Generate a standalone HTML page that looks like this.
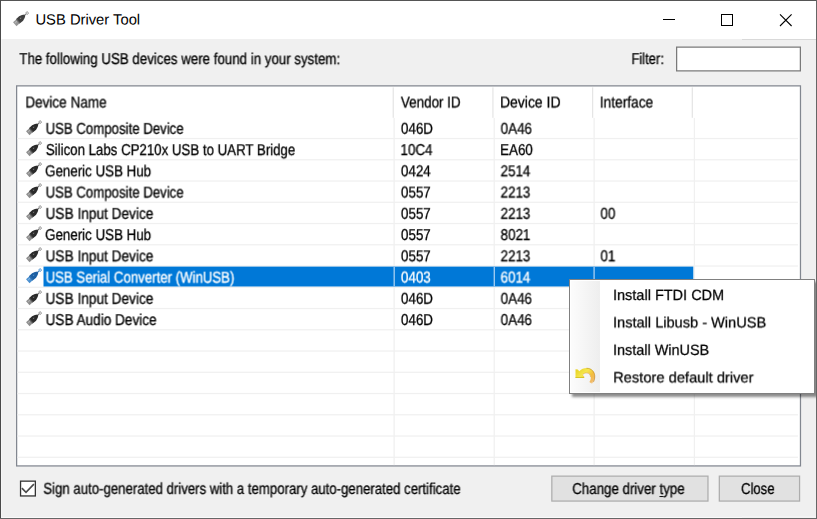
<!DOCTYPE html>
<html><head><meta charset="utf-8"><title>USB Driver Tool</title>
<style>
html,body{margin:0;padding:0;}
body{width:817px;height:519px;overflow:hidden;background:#f0f0f0;font-family:"Liberation Sans", sans-serif;}
#win{position:absolute;left:0;top:0;width:817px;height:519px;background:#f0f0f0;overflow:hidden;}
#win div,#win span,#win svg{position:absolute;}
.t{left:0;top:0;text-rendering:geometricPrecision;white-space:nowrap;line-height:20px;transform-origin:0 0;}
.b{filter:blur(0.3px);-webkit-text-stroke:0.3px currentColor;}
.ic{filter:blur(0.35px);}
.ic0{opacity:0.9;filter:blur(0.25px);}
.m{filter:blur(0.25px);-webkit-text-stroke:0.25px currentColor;}
.t u{position:static;text-decoration-thickness:1.2px;text-underline-offset:1.5px;}
#titlebar{left:1px;top:1px;width:815px;height:38px;background:#fff;}
#bt{left:0;top:0;width:817px;height:1px;background:#555;}
#bl{left:0;top:0;width:1px;height:519px;background:#4a4a4a;}
#br{left:816px;top:0;width:1px;height:519px;background:#666;}
#bb{left:0;top:518px;width:817px;height:1px;background:#666;}
#menu{left:569.2px;top:279.3px;width:245.8px;height:114.4px;box-sizing:border-box;border:1px solid #808080;background:#fff;box-shadow:2.5px 2.5px 2.5px rgba(0,0,0,0.45);}
#mmargin{left:0.4px;top:1.0px;width:29.3px;height:110.4px;background:linear-gradient(to right,#fcfcfc,#eeeeee);}
</style></head><body>
<div id="win">
<div id="titlebar"></div>
<svg id="shapes" style="left:0;top:0;filter:blur(0.3px)" width="817" height="519" viewBox="0 0 817 519"><rect x="676.625" y="47.125" width="123.750" height="23.750" fill="#fff" stroke="#7a7a7a" stroke-width="1.25"/>
<rect x="16.625" y="85.875" width="783.850" height="380.050" fill="#fff" stroke="#828790" stroke-width="1.25"/>
<rect x="17.25" y="137.90" width="780.7" height="1.25" fill="#f0f0f0"/>
<rect x="17.25" y="159.15" width="780.7" height="1.25" fill="#f0f0f0"/>
<rect x="17.25" y="180.40" width="780.7" height="1.25" fill="#f0f0f0"/>
<rect x="17.25" y="201.65" width="780.7" height="1.25" fill="#f0f0f0"/>
<rect x="17.25" y="222.90" width="780.7" height="1.25" fill="#f0f0f0"/>
<rect x="17.25" y="244.15" width="780.7" height="1.25" fill="#f0f0f0"/>
<rect x="17.25" y="265.40" width="780.7" height="1.25" fill="#f0f0f0"/>
<rect x="17.25" y="286.65" width="780.7" height="1.25" fill="#f0f0f0"/>
<rect x="17.25" y="307.90" width="780.7" height="1.25" fill="#f0f0f0"/>
<rect x="17.25" y="329.15" width="780.7" height="1.25" fill="#f0f0f0"/>
<rect x="17.25" y="350.40" width="780.7" height="1.25" fill="#f0f0f0"/>
<rect x="17.25" y="371.65" width="780.7" height="1.25" fill="#f0f0f0"/>
<rect x="17.25" y="392.90" width="780.7" height="1.25" fill="#f0f0f0"/>
<rect x="17.25" y="414.15" width="780.7" height="1.25" fill="#f0f0f0"/>
<rect x="17.25" y="435.40" width="780.7" height="1.25" fill="#f0f0f0"/>
<rect x="17.25" y="456.65" width="780.7" height="1.25" fill="#f0f0f0"/>
<rect x="393.50" y="117.9" width="1.25" height="347.2" fill="#f0f0f0"/>
<rect x="493.60" y="117.9" width="1.25" height="347.2" fill="#f0f0f0"/>
<rect x="593.50" y="117.9" width="1.25" height="347.2" fill="#f0f0f0"/>
<rect x="693.80" y="117.9" width="1.25" height="347.2" fill="#f0f0f0"/>
<rect x="392.60" y="87.4" width="1.25" height="30.4" fill="#e5e5e5"/>
<rect x="492.30" y="87.4" width="1.25" height="30.4" fill="#e5e5e5"/>
<rect x="592.00" y="87.4" width="1.25" height="30.4" fill="#e5e5e5"/>
<rect x="691.70" y="87.4" width="1.25" height="30.4" fill="#e5e5e5"/>
<rect x="43.5" y="266.6" width="649.8" height="19.9" fill="#0078d7"/>
<rect x="393.50" y="266.6" width="1.4" height="19.9" fill="#9cc9f0"/>
<rect x="493.60" y="266.6" width="1.4" height="19.9" fill="#9cc9f0"/>
<rect x="593.40" y="266.6" width="1.4" height="19.9" fill="#9cc9f0"/>
<rect x="20.550" y="481.150" width="14.800" height="14.800" fill="#fff" stroke="#333" stroke-width="1.3"/>
<path d="M21.9,488.2 L26,492.3 L33.9,484.2" fill="none" stroke="#4a4a4a" stroke-width="1.65"/>
<rect x="551.825" y="476.125" width="156.150" height="24.950" fill="#e1e1e1" stroke="#adadad" stroke-width="1.25"/>
<rect x="719.325" y="476.125" width="80.250" height="24.950" fill="#e1e1e1" stroke="#adadad" stroke-width="1.25"/></svg>
<div id="menu"><div id="mmargin"></div></div>
<svg style="left:570px;top:362px;filter:blur(0.35px)" width="32" height="28" viewBox="570 362 32 28">
<defs><linearGradient id="ug" gradientUnits="userSpaceOnUse" x1="578" y1="368" x2="593" y2="385">
<stop offset="0" stop-color="#e6d322"/><stop offset="0.35" stop-color="#f6e64e"/><stop offset="0.62" stop-color="#f3bd3e"/><stop offset="0.85" stop-color="#f2a838" stop-opacity="0.75"/><stop offset="1" stop-color="#f2a838" stop-opacity="0"/></linearGradient></defs>
<path d="M575.5,369.3 L577.8,369.5 L579.3,371.3 C581.5,368.8 584.5,367.8 587.5,368 C592,368.4 595.2,372 595,377 C594.9,380 593.8,382.3 592,383.8 L589.3,382 C590.5,380.6 590.9,378.9 590.8,377 C590.6,374.6 589,372.9 586.8,372.8 C585,372.8 583.6,373.6 582.6,374.8 L584.2,376.4 L584.2,378 L575.5,378 Z" fill="url(#ug)"/>
<path d="M575.5,377.3 L584.2,377.3 L584.2,378 L575.5,378 Z" fill="#c9b818"/>
<path d="M586.5,368.2 C591.6,368.3 595,372 594.8,377 C594.7,379 594.3,380.6 593.5,382" fill="none" stroke="#a8741c" stroke-opacity="0.55" stroke-width="0.8"/>
<path d="M582.8,374.6 C583.8,373.4 585.2,372.9 586.8,373 C588.9,373.1 590.4,374.7 590.6,377" fill="none" stroke="#d08a20" stroke-opacity="0.6" stroke-width="0.7"/>
</svg>
<svg class="ic0" style="left:11.00px;top:9.30px" width="20" height="19" viewBox="0 0 20 19"><g transform="translate(4,15) rotate(-42)"><rect x="-0.3" y="-2.6" width="4.6" height="5.2" fill="#8c8c8c"/><rect x="0.6" y="-1.3" width="2.8" height="1.1" fill="#b0b0b0"/><rect x="3.6" y="-2.8" width="1.4" height="5.6" fill="#5a5a5a"/><path d="M4.6,-2.9 L8.2,-3.0 Q11.5,-2.2 13.4,-0.6 L13.4,0.6 Q11.5,2.2 8.2,3.0 L4.6,2.9 Z" fill="#2b2b2b"/><rect x="7.2" y="-0.9" width="1.6" height="0.8" fill="#b0b0b0" opacity="0.7"/><path d="M13.2,0 L15.2,0" stroke="#5a5a5a" stroke-width="0.8"/><circle cx="16.3" cy="0" r="1.25" fill="none" stroke="#8c8c8c" stroke-width="0.9"/></g></svg>
<svg class="ic" style="left:23.60px;top:117.60px" width="20" height="19" viewBox="0 0 20 19"><g transform="translate(4,15) rotate(-42)"><rect x="-0.3" y="-2.6" width="4.6" height="5.2" fill="#8c8c8c"/><rect x="0.6" y="-1.3" width="2.8" height="1.1" fill="#b0b0b0"/><rect x="3.6" y="-2.8" width="1.4" height="5.6" fill="#5a5a5a"/><path d="M4.6,-2.9 L8.2,-3.0 Q11.5,-2.2 13.4,-0.6 L13.4,0.6 Q11.5,2.2 8.2,3.0 L4.6,2.9 Z" fill="#2b2b2b"/><rect x="7.2" y="-0.9" width="1.6" height="0.8" fill="#b0b0b0" opacity="0.7"/><path d="M13.2,0 L15.2,0" stroke="#5a5a5a" stroke-width="0.8"/><circle cx="16.3" cy="0" r="1.25" fill="none" stroke="#8c8c8c" stroke-width="0.9"/></g></svg>
<svg class="ic" style="left:23.60px;top:138.85px" width="20" height="19" viewBox="0 0 20 19"><g transform="translate(4,15) rotate(-42)"><rect x="-0.3" y="-2.6" width="4.6" height="5.2" fill="#8c8c8c"/><rect x="0.6" y="-1.3" width="2.8" height="1.1" fill="#b0b0b0"/><rect x="3.6" y="-2.8" width="1.4" height="5.6" fill="#5a5a5a"/><path d="M4.6,-2.9 L8.2,-3.0 Q11.5,-2.2 13.4,-0.6 L13.4,0.6 Q11.5,2.2 8.2,3.0 L4.6,2.9 Z" fill="#2b2b2b"/><rect x="7.2" y="-0.9" width="1.6" height="0.8" fill="#b0b0b0" opacity="0.7"/><path d="M13.2,0 L15.2,0" stroke="#5a5a5a" stroke-width="0.8"/><circle cx="16.3" cy="0" r="1.25" fill="none" stroke="#8c8c8c" stroke-width="0.9"/></g></svg>
<svg class="ic" style="left:23.60px;top:160.10px" width="20" height="19" viewBox="0 0 20 19"><g transform="translate(4,15) rotate(-42)"><rect x="-0.3" y="-2.6" width="4.6" height="5.2" fill="#8c8c8c"/><rect x="0.6" y="-1.3" width="2.8" height="1.1" fill="#b0b0b0"/><rect x="3.6" y="-2.8" width="1.4" height="5.6" fill="#5a5a5a"/><path d="M4.6,-2.9 L8.2,-3.0 Q11.5,-2.2 13.4,-0.6 L13.4,0.6 Q11.5,2.2 8.2,3.0 L4.6,2.9 Z" fill="#2b2b2b"/><rect x="7.2" y="-0.9" width="1.6" height="0.8" fill="#b0b0b0" opacity="0.7"/><path d="M13.2,0 L15.2,0" stroke="#5a5a5a" stroke-width="0.8"/><circle cx="16.3" cy="0" r="1.25" fill="none" stroke="#8c8c8c" stroke-width="0.9"/></g></svg>
<svg class="ic" style="left:23.60px;top:181.35px" width="20" height="19" viewBox="0 0 20 19"><g transform="translate(4,15) rotate(-42)"><rect x="-0.3" y="-2.6" width="4.6" height="5.2" fill="#8c8c8c"/><rect x="0.6" y="-1.3" width="2.8" height="1.1" fill="#b0b0b0"/><rect x="3.6" y="-2.8" width="1.4" height="5.6" fill="#5a5a5a"/><path d="M4.6,-2.9 L8.2,-3.0 Q11.5,-2.2 13.4,-0.6 L13.4,0.6 Q11.5,2.2 8.2,3.0 L4.6,2.9 Z" fill="#2b2b2b"/><rect x="7.2" y="-0.9" width="1.6" height="0.8" fill="#b0b0b0" opacity="0.7"/><path d="M13.2,0 L15.2,0" stroke="#5a5a5a" stroke-width="0.8"/><circle cx="16.3" cy="0" r="1.25" fill="none" stroke="#8c8c8c" stroke-width="0.9"/></g></svg>
<svg class="ic" style="left:23.60px;top:202.60px" width="20" height="19" viewBox="0 0 20 19"><g transform="translate(4,15) rotate(-42)"><rect x="-0.3" y="-2.6" width="4.6" height="5.2" fill="#8c8c8c"/><rect x="0.6" y="-1.3" width="2.8" height="1.1" fill="#b0b0b0"/><rect x="3.6" y="-2.8" width="1.4" height="5.6" fill="#5a5a5a"/><path d="M4.6,-2.9 L8.2,-3.0 Q11.5,-2.2 13.4,-0.6 L13.4,0.6 Q11.5,2.2 8.2,3.0 L4.6,2.9 Z" fill="#2b2b2b"/><rect x="7.2" y="-0.9" width="1.6" height="0.8" fill="#b0b0b0" opacity="0.7"/><path d="M13.2,0 L15.2,0" stroke="#5a5a5a" stroke-width="0.8"/><circle cx="16.3" cy="0" r="1.25" fill="none" stroke="#8c8c8c" stroke-width="0.9"/></g></svg>
<svg class="ic" style="left:23.60px;top:223.85px" width="20" height="19" viewBox="0 0 20 19"><g transform="translate(4,15) rotate(-42)"><rect x="-0.3" y="-2.6" width="4.6" height="5.2" fill="#8c8c8c"/><rect x="0.6" y="-1.3" width="2.8" height="1.1" fill="#b0b0b0"/><rect x="3.6" y="-2.8" width="1.4" height="5.6" fill="#5a5a5a"/><path d="M4.6,-2.9 L8.2,-3.0 Q11.5,-2.2 13.4,-0.6 L13.4,0.6 Q11.5,2.2 8.2,3.0 L4.6,2.9 Z" fill="#2b2b2b"/><rect x="7.2" y="-0.9" width="1.6" height="0.8" fill="#b0b0b0" opacity="0.7"/><path d="M13.2,0 L15.2,0" stroke="#5a5a5a" stroke-width="0.8"/><circle cx="16.3" cy="0" r="1.25" fill="none" stroke="#8c8c8c" stroke-width="0.9"/></g></svg>
<svg class="ic" style="left:23.60px;top:245.10px" width="20" height="19" viewBox="0 0 20 19"><g transform="translate(4,15) rotate(-42)"><rect x="-0.3" y="-2.6" width="4.6" height="5.2" fill="#8c8c8c"/><rect x="0.6" y="-1.3" width="2.8" height="1.1" fill="#b0b0b0"/><rect x="3.6" y="-2.8" width="1.4" height="5.6" fill="#5a5a5a"/><path d="M4.6,-2.9 L8.2,-3.0 Q11.5,-2.2 13.4,-0.6 L13.4,0.6 Q11.5,2.2 8.2,3.0 L4.6,2.9 Z" fill="#2b2b2b"/><rect x="7.2" y="-0.9" width="1.6" height="0.8" fill="#b0b0b0" opacity="0.7"/><path d="M13.2,0 L15.2,0" stroke="#5a5a5a" stroke-width="0.8"/><circle cx="16.3" cy="0" r="1.25" fill="none" stroke="#8c8c8c" stroke-width="0.9"/></g></svg>
<svg class="ic" style="left:23.60px;top:266.35px" width="20" height="19" viewBox="0 0 20 19"><g transform="translate(4,15) rotate(-42)"><rect x="-0.3" y="-2.6" width="4.6" height="5.2" fill="#4a8fcf"/><rect x="0.6" y="-1.3" width="2.8" height="1.1" fill="#7fb4e4"/><rect x="3.6" y="-2.8" width="1.4" height="5.6" fill="#2f6fb0"/><path d="M4.6,-2.9 L8.2,-3.0 Q11.5,-2.2 13.4,-0.6 L13.4,0.6 Q11.5,2.2 8.2,3.0 L4.6,2.9 Z" fill="#1c5fa3"/><rect x="7.2" y="-0.9" width="1.6" height="0.8" fill="#7fb4e4" opacity="0.7"/><path d="M13.2,0 L15.2,0" stroke="#2f6fb0" stroke-width="0.8"/><circle cx="16.3" cy="0" r="1.25" fill="none" stroke="#4a8fcf" stroke-width="0.9"/></g></svg>
<svg class="ic" style="left:23.60px;top:287.60px" width="20" height="19" viewBox="0 0 20 19"><g transform="translate(4,15) rotate(-42)"><rect x="-0.3" y="-2.6" width="4.6" height="5.2" fill="#8c8c8c"/><rect x="0.6" y="-1.3" width="2.8" height="1.1" fill="#b0b0b0"/><rect x="3.6" y="-2.8" width="1.4" height="5.6" fill="#5a5a5a"/><path d="M4.6,-2.9 L8.2,-3.0 Q11.5,-2.2 13.4,-0.6 L13.4,0.6 Q11.5,2.2 8.2,3.0 L4.6,2.9 Z" fill="#2b2b2b"/><rect x="7.2" y="-0.9" width="1.6" height="0.8" fill="#b0b0b0" opacity="0.7"/><path d="M13.2,0 L15.2,0" stroke="#5a5a5a" stroke-width="0.8"/><circle cx="16.3" cy="0" r="1.25" fill="none" stroke="#8c8c8c" stroke-width="0.9"/></g></svg>
<svg class="ic" style="left:23.60px;top:308.85px" width="20" height="19" viewBox="0 0 20 19"><g transform="translate(4,15) rotate(-42)"><rect x="-0.3" y="-2.6" width="4.6" height="5.2" fill="#8c8c8c"/><rect x="0.6" y="-1.3" width="2.8" height="1.1" fill="#b0b0b0"/><rect x="3.6" y="-2.8" width="1.4" height="5.6" fill="#5a5a5a"/><path d="M4.6,-2.9 L8.2,-3.0 Q11.5,-2.2 13.4,-0.6 L13.4,0.6 Q11.5,2.2 8.2,3.0 L4.6,2.9 Z" fill="#2b2b2b"/><rect x="7.2" y="-0.9" width="1.6" height="0.8" fill="#b0b0b0" opacity="0.7"/><path d="M13.2,0 L15.2,0" stroke="#5a5a5a" stroke-width="0.8"/><circle cx="16.3" cy="0" r="1.25" fill="none" stroke="#8c8c8c" stroke-width="0.9"/></g></svg>
<svg style="left:660px;top:10px" width="140" height="20" viewBox="0 0 140 20">
<path d="M3,9.5 H15" stroke="#000" stroke-width="1" fill="none"/>
<rect x="61.5" y="4.5" width="11" height="11" stroke="#000" stroke-width="1" fill="none"/>
<path d="M120.0,4.4 L131.6,16.0 M131.6,4.4 L120.0,16.0" stroke="#000" stroke-width="1.1" fill="none"/>
</svg>
<span class="t tt" style="font-size:14.8px;transform:translate(35.44px,10.50px) scaleX(0.9973) rotate(0.03deg);color:#000">USB Driver Tool</span>
<span class="t b" style="font-size:15.8px;transform:translate(19.36px,50.00px) scaleX(0.8421) rotate(0.03deg);color:#000">The following USB devices were found in your system:</span>
<span class="t b" style="font-size:15.8px;transform:translate(631.44px,50.00px) scaleX(0.8243) rotate(0.03deg);color:#000">Filter:</span>
<span class="t b" style="font-size:15.8px;transform:translate(25.40px,93.50px) scaleX(0.8575) rotate(0.03deg);color:#000">Device Name</span>
<span class="t b" style="font-size:15.8px;transform:translate(400.86px,93.50px) scaleX(0.8506) rotate(0.03deg);color:#000">Vendor ID</span>
<span class="t b" style="font-size:15.8px;transform:translate(500.07px,93.50px) scaleX(0.8829) rotate(0.03deg);color:#000">Device ID</span>
<span class="t b" style="font-size:15.8px;transform:translate(599.75px,93.50px) scaleX(0.8695) rotate(0.03deg);color:#000">Interface</span>
<span class="t b" style="font-size:15.8px;transform:translate(43.38px,479.80px) scaleX(0.8351) rotate(0.03deg);color:#000">Sign auto-generated drivers with a temporary auto-generated certificate</span>
<span class="t b" style="font-size:15.8px;transform:translate(572.35px,480.00px) scaleX(0.8416) rotate(0.03deg);color:#000">Change driver <u>t</u>ype</span>
<span class="t b" style="font-size:15.8px;transform:translate(741.16px,480.00px) scaleX(0.8275) rotate(0.03deg);color:#000">Close</span>
<span class="t m" style="font-size:14.8px;transform:translate(613.09px,286.00px) scaleX(0.9798) rotate(0.03deg);color:#000">Install FTDI CDM</span>
<span class="t m" style="font-size:14.8px;transform:translate(613.08px,313.40px) scaleX(0.9853) rotate(0.03deg);color:#000">Install Libusb - WinUSB</span>
<span class="t m" style="font-size:14.8px;transform:translate(613.09px,340.90px) scaleX(0.9744) rotate(0.03deg);color:#000">Install WinUSB</span>
<span class="t m" style="font-size:14.8px;transform:translate(613.20px,368.40px) scaleX(0.9925) rotate(0.03deg);color:#000">Restore default driver</span>
<span class="t b" style="font-size:15.8px;transform:translate(45.58px,119.80px) scaleX(0.8363) rotate(0.03deg);color:#000">USB Composite Device</span>
<span class="t b" style="font-size:15.8px;transform:translate(400.97px,119.80px) scaleX(0.8487) rotate(0.03deg);color:#000">046D</span>
<span class="t b" style="font-size:15.8px;transform:translate(500.67px,119.80px) scaleX(0.8487) rotate(0.03deg);color:#000">0A46</span>
<span class="t b" style="font-size:15.8px;transform:translate(45.87px,141.05px) scaleX(0.8394) rotate(0.03deg);color:#000">Silicon Labs CP210x USB to UART Bridge</span>
<span class="t b" style="font-size:15.8px;transform:translate(400.48px,141.05px) scaleX(0.8487) rotate(0.03deg);color:#000">10C4</span>
<span class="t b" style="font-size:15.8px;transform:translate(500.11px,141.05px) scaleX(0.8487) rotate(0.03deg);color:#000">EA60</span>
<span class="t b" style="font-size:15.8px;transform:translate(45.15px,162.30px) scaleX(0.8444) rotate(0.03deg);color:#000">Generic USB Hub</span>
<span class="t b" style="font-size:15.8px;transform:translate(400.97px,162.30px) scaleX(0.8487) rotate(0.03deg);color:#000">0424</span>
<span class="t b" style="font-size:15.8px;transform:translate(500.57px,162.30px) scaleX(0.8487) rotate(0.03deg);color:#000">2514</span>
<span class="t b" style="font-size:15.8px;transform:translate(45.58px,183.55px) scaleX(0.8363) rotate(0.03deg);color:#000">USB Composite Device</span>
<span class="t b" style="font-size:15.8px;transform:translate(400.97px,183.55px) scaleX(0.8487) rotate(0.03deg);color:#000">0557</span>
<span class="t b" style="font-size:15.8px;transform:translate(500.57px,183.55px) scaleX(0.8487) rotate(0.03deg);color:#000">2213</span>
<span class="t b" style="font-size:15.8px;transform:translate(45.54px,204.80px) scaleX(0.8650) rotate(0.03deg);color:#000">USB Input Device</span>
<span class="t b" style="font-size:15.8px;transform:translate(400.97px,204.80px) scaleX(0.8487) rotate(0.03deg);color:#000">0557</span>
<span class="t b" style="font-size:15.8px;transform:translate(500.57px,204.80px) scaleX(0.8487) rotate(0.03deg);color:#000">2213</span>
<span class="t b" style="font-size:15.8px;transform:translate(600.47px,204.80px) scaleX(0.8487) rotate(0.03deg);color:#000">00</span>
<span class="t b" style="font-size:15.8px;transform:translate(45.15px,226.05px) scaleX(0.8444) rotate(0.03deg);color:#000">Generic USB Hub</span>
<span class="t b" style="font-size:15.8px;transform:translate(400.97px,226.05px) scaleX(0.8487) rotate(0.03deg);color:#000">0557</span>
<span class="t b" style="font-size:15.8px;transform:translate(500.60px,226.05px) scaleX(0.8487) rotate(0.03deg);color:#000">8021</span>
<span class="t b" style="font-size:15.8px;transform:translate(45.54px,247.30px) scaleX(0.8650) rotate(0.03deg);color:#000">USB Input Device</span>
<span class="t b" style="font-size:15.8px;transform:translate(400.97px,247.30px) scaleX(0.8487) rotate(0.03deg);color:#000">0557</span>
<span class="t b" style="font-size:15.8px;transform:translate(500.57px,247.30px) scaleX(0.8487) rotate(0.03deg);color:#000">2213</span>
<span class="t b" style="font-size:15.8px;transform:translate(600.47px,247.30px) scaleX(0.8487) rotate(0.03deg);color:#000">01</span>
<span class="t b" style="font-size:15.8px;transform:translate(45.58px,268.55px) scaleX(0.8370) rotate(0.03deg);color:#fff">USB Serial Converter (WinUSB)</span>
<span class="t b" style="font-size:15.8px;transform:translate(400.97px,268.55px) scaleX(0.8487) rotate(0.03deg);color:#fff">0403</span>
<span class="t b" style="font-size:15.8px;transform:translate(500.55px,268.55px) scaleX(0.8487) rotate(0.03deg);color:#fff">6014</span>
<span class="t b" style="font-size:15.8px;transform:translate(45.54px,289.80px) scaleX(0.8650) rotate(0.03deg);color:#000">USB Input Device</span>
<span class="t b" style="font-size:15.8px;transform:translate(400.97px,289.80px) scaleX(0.8487) rotate(0.03deg);color:#000">046D</span>
<span class="t b" style="font-size:15.8px;transform:translate(500.67px,289.80px) scaleX(0.8487) rotate(0.03deg);color:#000">0A46</span>
<span class="t b" style="font-size:15.8px;transform:translate(45.55px,311.05px) scaleX(0.8607) rotate(0.03deg);color:#000">USB Audio Device</span>
<span class="t b" style="font-size:15.8px;transform:translate(400.97px,311.05px) scaleX(0.8487) rotate(0.03deg);color:#000">046D</span>
<span class="t b" style="font-size:15.8px;transform:translate(500.67px,311.05px) scaleX(0.8487) rotate(0.03deg);color:#000">0A46</span>
<div style="left:742px;top:39px;width:74px;height:1px;background:#d9d9d9"></div><div style="left:1px;top:517px;width:741px;height:1px;background:#fafafa"></div><div style="left:1px;top:39px;width:1px;height:478px;background:#f6f6f6"></div><div style="left:742px;top:516px;width:74px;height:2px;background:#f4f4f4"></div>
<div id="bt"></div><div id="bl"></div><div id="br"></div><div id="bb"></div>
</div>
</body></html>
